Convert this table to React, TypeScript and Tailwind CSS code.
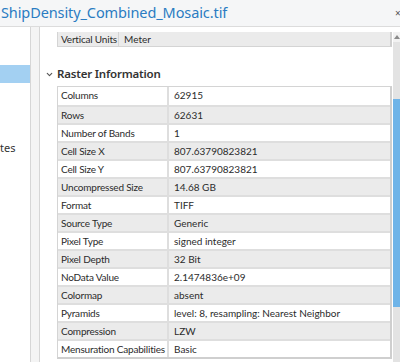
import { ChevronDown } from "lucide-react";

const rows: [string, string][] = [
  ["Columns", "62915"],
  ["Rows", "62631"],
  ["Number of Bands", "1"],
  ["Cell Size X", "807.63790823821"],
  ["Cell Size Y", "807.63790823821"],
  ["Uncompressed Size", "14.68 GB"],
  ["Format", "TIFF"],
  ["Source Type", "Generic"],
  ["Pixel Type", "signed integer"],
  ["Pixel Depth", "32 Bit"],
  ["NoData Value", "2.1474836e+09"],
  ["Colormap", "absent"],
  ["Pyramids", "level: 8, resampling: Nearest Neighbor"],
  ["Compression", "LZW"],
  ["Mensuration Capabilities", "Basic"],
];

export default function App() {
  return (
    <div className="w-[400px] h-[362px] overflow-hidden bg-white text-[#2b2b2b] font-['Noto_Sans',sans-serif]">
      {/* Title bar */}
      <div className="relative h-[27px] bg-[#f5f6f7] border-b border-[#dcdcdc] flex items-center">
        <span className="text-[14.5px] leading-none text-[#2a7cc2] tracking-[-0.1px] pl-[1px] pb-[1px]">
          ShipDensity_Combined_Mosaic.tif
        </span>
        <span className="absolute left-[395px] top-[6px] text-[10px] text-[#555]">×</span>
      </div>

      <div className="flex h-[335px]">
        {/* Side navigation, clipped */}
        <div className="w-[31px] border-r border-[#d6d6d6] bg-white flex flex-col">
          <div className="h-[38px]" />
          <div className="h-[18px] bg-[#a3d0f2]" />
          <div className="h-[57px]" />
          <div className="text-[11px] leading-[16px] text-[#333] whitespace-nowrap">tes</div>
        </div>
        <div className="w-[8px] bg-[#f4f4f4]" />

        {/* Properties pane */}
        <div className="flex-1 flex border-l border-[#d6d6d6] bg-white">
          <div className="flex-1 pl-[17px] pr-[1px] font-['Lato',sans-serif]">
            <div className="mt-[5px] flex h-[15px] bg-[#ebebeb] border border-t-0 border-[#d4d4d4] border-r-2 border-r-[#cfcfcf] text-[10px] leading-[14px] whitespace-nowrap">
              <div className="w-[61px] shrink-0 border-r border-[#d4d4d4] pl-[3px] tracking-[-0.2px]">Vertical Units</div>
              <div className="pl-[5px]">Meter</div>
            </div>

            <div className="flex items-center mt-[18px] h-[18px] ml-[-12px] font-['Noto_Sans',sans-serif]">
              <ChevronDown className="w-[9px] h-[9px] text-[#555]" strokeWidth={3} />
              <span className="ml-[3px] text-[11.5px] font-semibold tracking-[-0.2px] text-[#333] leading-none">
                Raster Information
              </span>
            </div>

            <div className="mt-[3px] border border-[#d4d4d4] border-r-2 border-b-2 border-r-[#cfcfcf] border-b-[#cfcfcf]">
              {rows.map(([k, v], i) => (
                <div
                  key={k}
                  className={`flex h-[18px] text-[10px] leading-[16px] ${i > 0 ? "border-t-2 border-[#dedede]" : ""} ${i % 2 === 1 ? "bg-[#ebebeb]" : "bg-white"}`}
                >
                  <div className="w-[111px] shrink-0 border-r-2 border-[#dedede] pl-[3px] whitespace-nowrap tracking-[-0.2px]">{k}</div>
                  <div className="pl-[5px] whitespace-nowrap">{v}</div>
                </div>
              ))}
            </div>
          </div>

          {/* Scrollbar */}
          <div className="w-[7px] flex flex-col mt-[5px]">
            <div className="h-[10px] bg-[#f2f2f2] flex items-center justify-center">
              <svg width="6" height="4" viewBox="0 0 6 4">
                <path d="M0 4 L3 0 L6 4 Z" fill="#8a8a8a" />
              </svg>
            </div>
            <div className="flex-1 bg-[#e3e3e3] flex flex-col">
              <div className="h-[57px]" />
              <div className="h-[208px] bg-[#6fb4e8]" />
            </div>
          </div>
        </div>
      </div>
    </div>
  );
}
